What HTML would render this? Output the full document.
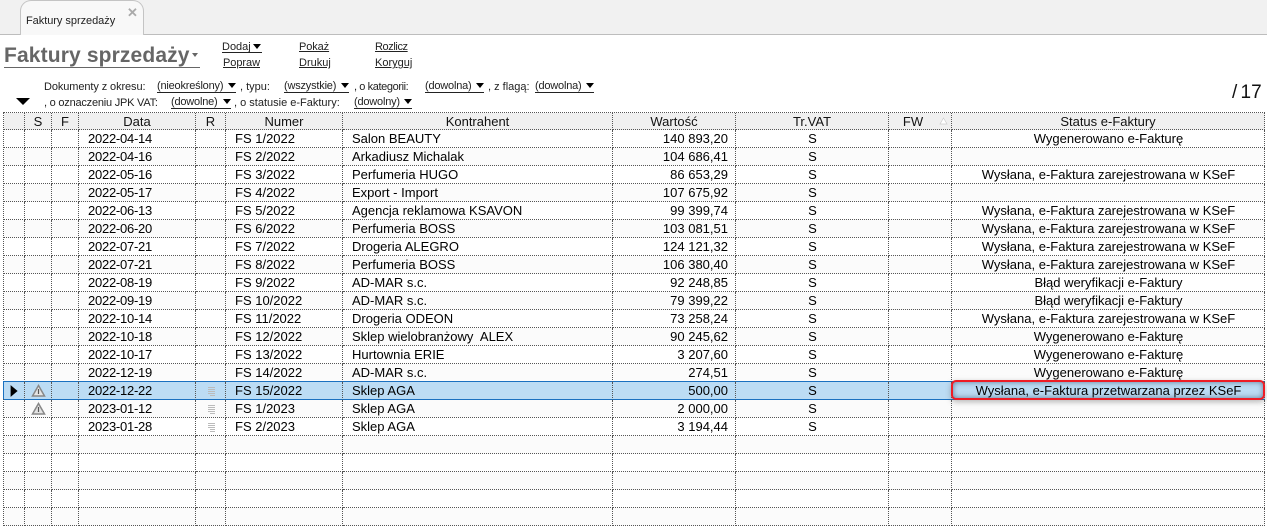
<!DOCTYPE html>
<html><head><meta charset="utf-8"><style>
html,body{margin:0;padding:0;background:#fff;width:1267px;height:527px;overflow:hidden;font-family:"Liberation Sans",sans-serif;color:#000}
.a{position:absolute;white-space:nowrap}
.s{font-size:11px;line-height:13px;color:#222}
.u{text-decoration:underline}
.f{position:absolute;white-space:nowrap;font-size:11px;line-height:11px;height:11px;color:#222;border-bottom:1px solid #222;letter-spacing:-.2px}
.f i{position:absolute;right:0;top:2px;width:0;height:0;border-left:4.500px solid transparent;border-right:4.500px solid transparent;border-top:5px solid #000}
table{position:absolute;left:3px;top:112px;border-collapse:separate;border-spacing:0;table-layout:fixed;width:1262px;border-top:1px dotted #555;border-left:1px dotted #555;font-size:13px}
td,th{box-sizing:border-box;height:18px;padding:0;border-right:1px dotted #555;border-bottom:1px dotted #555;font-weight:normal;overflow:hidden;white-space:nowrap;line-height:16px}
th{background:#f0f0f0;height:17px;text-align:center;color:#111;padding-top:2px;line-height:14px}
tr:nth-child(odd) td{background:#fbfbfb}
.d,.n,.k{padding-left:9px}
.d{letter-spacing:-.25px}
.w{text-align:right;padding-right:7px}
.c{text-align:center;padding-left:1px}
tr.pre td{border-bottom:1px solid #1a70c0}
tr.sel td{background:#bcdcf4!important;border-bottom:1px solid #1a70c0}
</style></head><body>
<div class="a" style="left:0;top:0;width:1267px;height:34px;background:#f1f1f1;border-bottom:1px solid #bdbdbd"></div>
<div class="a" style="left:20px;top:0;width:124px;height:35px;box-sizing:border-box;background:#f8f8f8;border:1px solid #c4c4c4;border-bottom:0;border-radius:11px 11px 0 0"></div>
<div class="a" style="left:26px;top:14px;font-size:11px;line-height:14px;letter-spacing:-.04px;color:#222">Faktury sprzedaży</div>
<div class="a" style="left:127px;top:5px;font-size:13px;line-height:16px;color:#aaa;font-weight:bold">✕</div>

<div class="a" style="left:4px;top:42px;width:196px;height:25px;border-bottom:1px solid #666"></div>
<div class="a" style="left:4px;top:43px;font-size:21px;line-height:25px;font-weight:bold;color:#666;letter-spacing:.14px">Faktury sprzedaży</div>
<div class="a" style="left:192px;top:53px;width:0;height:0;border-left:3.500px solid transparent;border-right:3.500px solid transparent;border-top:4px solid #666"></div>

<div class="a s" style="left:222px;top:41px">Dodaj</div><div class="a" style="left:253px;top:44px;width:0;height:0;border-left:4.500px solid transparent;border-right:4.500px solid transparent;border-top:5px solid #000"></div>
<div class="a" style="left:222px;top:52px;width:40px;border-bottom:1px solid #222"></div>
<div class="a s u" style="left:223px;top:57px;letter-spacing:-.05px">Popraw</div>
<div class="a s u" style="left:299px;top:41px;letter-spacing:-.1px">Pokaż</div>
<div class="a s u" style="left:299px;top:57px">Drukuj</div>
<div class="a s u" style="left:375px;top:41px;letter-spacing:-.4px">Rozlicz</div>
<div class="a s u" style="left:375px;top:57px">Koryguj</div>

<div class="a" style="left:16px;top:98px;width:0;height:0;border-left:7px solid transparent;border-right:7px solid transparent;border-top:7px solid #000"></div>

<div class="a s" style="left:44px;top:81px;letter-spacing:-.1px">Dokumenty z okresu:</div>
<div class="f" style="left:157px;top:81px;width:79px">(nieokreślony)<i></i></div>
<div class="a s" style="left:240px;top:81px">, typu:</div>
<div class="f" style="left:284px;top:81px;width:65px">(wszystkie)<i></i></div>
<div class="a s" style="left:354px;top:81px;letter-spacing:-.4px">, o kategorii:</div>
<div class="f" style="left:425px;top:81px;width:59px">(dowolna)<i></i></div>
<div class="a s" style="left:488px;top:81px">, z flagą:</div>
<div class="f" style="left:535px;top:81px;width:59px">(dowolna)<i></i></div>
<div class="a s" style="left:44px;top:97px;letter-spacing:-.22px">, o oznaczeniu JPK VAT:</div>
<div class="f" style="left:171px;top:97px;width:60px">(dowolne)<i></i></div>
<div class="a s" style="left:234px;top:97px">, o statusie e-Faktury:</div>
<div class="f" style="left:354px;top:97px;width:58px">(dowolny)<i></i></div>
<div class="a" style="left:1232px;top:82px;font-size:19px;line-height:22px;color:#111;word-spacing:-2px">/ 17</div>

<table>
<colgroup><col style="width:21px"><col style="width:27px"><col style="width:27px"><col style="width:117px"><col style="width:30px"><col style="width:117px"><col style="width:270px"><col style="width:123px"><col style="width:153px"><col style="width:63px"><col style="width:313px"></colgroup>
<tr><th></th><th>S</th><th>F</th><th>Data</th><th>R</th><th>Numer</th><th>Kontrahent</th><th>Wartość</th><th>Tr.VAT</th><th style="padding-right:14px">FW</th><th>Status e-Faktury</th></tr>
<tr><td></td><td></td><td></td><td class="d">2022-04-14</td><td></td><td class="n">FS 1/2022</td><td class="k">Salon BEAUTY</td><td class="w">140 893,20</td><td class="c">S</td><td></td><td class="c">Wygenerowano e-Fakturę</td></tr>
<tr><td></td><td></td><td></td><td class="d">2022-04-16</td><td></td><td class="n">FS 2/2022</td><td class="k">Arkadiusz Michalak</td><td class="w">104 686,41</td><td class="c">S</td><td></td><td class="c"></td></tr>
<tr><td></td><td></td><td></td><td class="d">2022-05-16</td><td></td><td class="n">FS 3/2022</td><td class="k">Perfumeria HUGO</td><td class="w">86 653,29</td><td class="c">S</td><td></td><td class="c">Wysłana, e-Faktura zarejestrowana w KSeF</td></tr>
<tr><td></td><td></td><td></td><td class="d">2022-05-17</td><td></td><td class="n">FS 4/2022</td><td class="k">Export - Import</td><td class="w">107 675,92</td><td class="c">S</td><td></td><td class="c"></td></tr>
<tr><td></td><td></td><td></td><td class="d">2022-06-13</td><td></td><td class="n">FS 5/2022</td><td class="k">Agencja reklamowa KSAVON</td><td class="w">99 399,74</td><td class="c">S</td><td></td><td class="c">Wysłana, e-Faktura zarejestrowana w KSeF</td></tr>
<tr><td></td><td></td><td></td><td class="d">2022-06-20</td><td></td><td class="n">FS 6/2022</td><td class="k">Perfumeria BOSS</td><td class="w">103 081,51</td><td class="c">S</td><td></td><td class="c">Wysłana, e-Faktura zarejestrowana w KSeF</td></tr>
<tr><td></td><td></td><td></td><td class="d">2022-07-21</td><td></td><td class="n">FS 7/2022</td><td class="k">Drogeria ALEGRO</td><td class="w">124 121,32</td><td class="c">S</td><td></td><td class="c">Wysłana, e-Faktura zarejestrowana w KSeF</td></tr>
<tr><td></td><td></td><td></td><td class="d">2022-07-21</td><td></td><td class="n">FS 8/2022</td><td class="k">Perfumeria BOSS</td><td class="w">106 380,40</td><td class="c">S</td><td></td><td class="c">Wysłana, e-Faktura zarejestrowana w KSeF</td></tr>
<tr><td></td><td></td><td></td><td class="d">2022-08-19</td><td></td><td class="n">FS 9/2022</td><td class="k">AD-MAR s.c.</td><td class="w">92 248,85</td><td class="c">S</td><td></td><td class="c">Błąd weryfikacji e-Faktury</td></tr>
<tr><td></td><td></td><td></td><td class="d">2022-09-19</td><td></td><td class="n">FS 10/2022</td><td class="k">AD-MAR s.c.</td><td class="w">79 399,22</td><td class="c">S</td><td></td><td class="c">Błąd weryfikacji e-Faktury</td></tr>
<tr><td></td><td></td><td></td><td class="d">2022-10-14</td><td></td><td class="n">FS 11/2022</td><td class="k">Drogeria ODEON</td><td class="w">73 258,24</td><td class="c">S</td><td></td><td class="c">Wysłana, e-Faktura zarejestrowana w KSeF</td></tr>
<tr><td></td><td></td><td></td><td class="d">2022-10-18</td><td></td><td class="n">FS 12/2022</td><td class="k" style="white-space:pre">Sklep wielobranżowy  ALEX</td><td class="w">90 245,62</td><td class="c">S</td><td></td><td class="c">Wygenerowano e-Fakturę</td></tr>
<tr><td></td><td></td><td></td><td class="d">2022-10-17</td><td></td><td class="n">FS 13/2022</td><td class="k">Hurtownia ERIE</td><td class="w">3 207,60</td><td class="c">S</td><td></td><td class="c">Wygenerowano e-Fakturę</td></tr>
<tr class="pre"><td></td><td></td><td></td><td class="d">2022-12-19</td><td></td><td class="n">FS 14/2022</td><td class="k">AD-MAR s.c.</td><td class="w">274,51</td><td class="c">S</td><td></td><td class="c">Wygenerowano e-Fakturę</td></tr>
<tr class="sel"><td></td><td></td><td></td><td class="d">2022-12-22</td><td></td><td class="n">FS 15/2022</td><td class="k">Sklep AGA</td><td class="w">500,00</td><td class="c">S</td><td></td><td class="c">Wysłana, e-Faktura przetwarzana przez KSeF</td></tr>
<tr><td></td><td></td><td></td><td class="d">2023-01-12</td><td></td><td class="n">FS 1/2023</td><td class="k">Sklep AGA</td><td class="w">2 000,00</td><td class="c">S</td><td></td><td class="c"></td></tr>
<tr><td></td><td></td><td></td><td class="d">2023-01-28</td><td></td><td class="n">FS 2/2023</td><td class="k">Sklep AGA</td><td class="w">3 194,44</td><td class="c">S</td><td></td><td class="c"></td></tr>
<tr><td></td><td></td><td></td><td></td><td></td><td></td><td></td><td></td><td></td><td></td><td></td></tr>
<tr><td></td><td></td><td></td><td></td><td></td><td></td><td></td><td></td><td></td><td></td><td></td></tr>
<tr><td></td><td></td><td></td><td></td><td></td><td></td><td></td><td></td><td></td><td></td><td></td></tr>
<tr><td></td><td></td><td></td><td></td><td></td><td></td><td></td><td></td><td></td><td></td><td></td></tr>
<tr><td></td><td></td><td></td><td></td><td></td><td></td><td></td><td></td><td></td><td></td><td></td></tr>
</table>

<svg class="a" style="left:0;top:0" width="1267" height="527">
<path d="M943.500 118l3.500 6h-7z" fill="#fff" stroke="#ccc" stroke-width=".7"/>
<path d="M3.500 381v18" stroke="#1a70c0" fill="none"/>
<path d="M11 386v10l6-5z" fill="#000" stroke="#000" stroke-width=".8"/>
<g fill="#e4e4e4" stroke="#888" stroke-width="1.500"><path d="M38.500 385.500l6 10.500h-12z"/><path d="M38.500 403.500l6 10.500h-12z"/></g>
<g stroke="#555" stroke-width="1.200"><path d="M38.500 389v5M38.500 407v5"/></g>
<g stroke="#bbb"><path d="M208 387.500h7M208 389.500h7M208 391.500h7M208 393.500h7M210 395.500h5M208 405.500h7M208 407.500h7M208 409.500h7M208 411.500h7M210 413.500h5M208 423.500h7M208 425.500h7M208 427.500h7M210 429.500h5M210 431.500h5"/></g>
</svg>
<div class="a" style="left:951px;top:380px;width:314px;height:20px;box-sizing:border-box;border:2px solid #ee1c25;border-radius:5px;box-shadow:0 2px 6px rgba(80,80,80,.4),inset 0 0 6px rgba(60,80,110,.7)"></div>
</body></html>
